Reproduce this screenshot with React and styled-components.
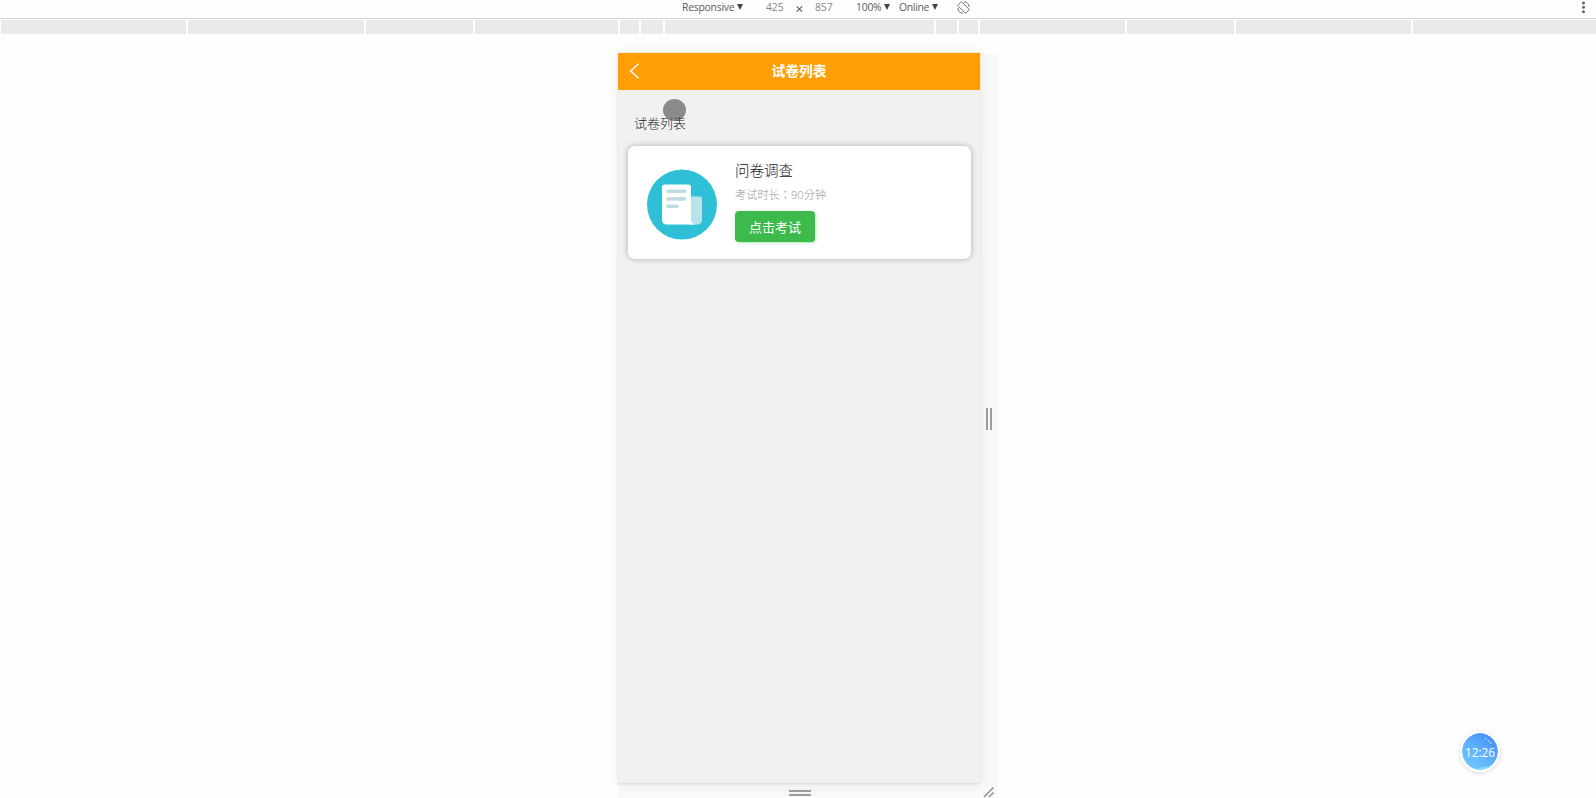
import React from "react";
import styled, { createGlobalStyle } from "styled-components";

const Global = createGlobalStyle`
  * { box-sizing: border-box; }
  html, body { margin: 0; background: #fefefe; overflow: hidden; }
  body { font-family: "Open Sans", "Noto Sans CJK SC", sans-serif; }
`;

const Page = styled.div`
  position: relative;
  width: 1596px;
  height: 798px;
  display: flex;
  flex-direction: column;
  overflow: hidden;
`;

const Toolbar = styled.header`
  flex: none;
  height: 19px;
  padding: 0 10px 4px 682px;
  display: flex;
  align-items: center;
  border-bottom: 1px solid #d2d2d2;
  background: #fefefe;
`;

const ToolCell = styled.div`
  flex: none;
  width: ${(p) => p.$w}px;
  display: flex;
  align-items: center;
  font-size: 10.4px;
  line-height: 14px;
  letter-spacing: ${(p) => p.$track || 0}px;
  white-space: nowrap;
  color: ${(p) => (p.$muted ? "#858585" : "#5c5c5c")};
`;

const Caret = styled.span`
  width: 0;
  height: 0;
  margin: 0 0 1px 3px;
  border: 3px solid transparent;
  border-top: 6px solid #444;
  border-bottom: 0;
`;

const MoreIcon = styled.svg`
  flex: none;
  display: block;
  margin-left: auto;
`;

const Times = styled.svg`
  margin-top: 4px;
`;

const Ruler = styled.div`
  flex: none;
  height: 15px;
  padding: 1px 0 0 1px;
  display: flex;
  gap: 2px;
`;

const Segment = styled.div`
  flex: ${(p) => (p.$w ? `0 0 ${p.$w}px` : "1")};
  background: #eaeaea;
`;

const Stage = styled.main`
  width: 379px;
  height: 745px;
  margin: 19px 0 0 618px;
  display: grid;
  grid-template-columns: 362px 17px;
  grid-template-rows: 731px 14px;
  background: #f9f9f9;
`;

const Phone = styled.section`
  background: #f1f1f1;
  border-bottom: 1px solid #e3e3e3;
  box-shadow: 0 0 0 0.5px #dedede, 0 0 14px rgba(0, 0, 0, 0.07);
`;

const NavBar = styled.div`
  height: 37px;
  padding: 0 11px 2px;
  display: grid;
  grid-template-columns: 12px 1fr 12px;
  align-items: center;
  background: #ff9e05;
  color: #fff;
`;

const NavTitle = styled.h1`
  margin: 0;
  text-align: center;
  font-size: 13.8px;
  line-height: 20px;
  font-weight: 700;
`;

const ListHeading = styled.h2`
  margin: 0;
  padding: 24px 0 0 16px;
  font-size: 13px;
  line-height: 19px;
  font-weight: 300;
  color: #181818;
`;

const Card = styled.article`
  height: 113px;
  margin: 13px 9px 0 10px;
  padding: 0 0 0 19px;
  display: flex;
  border-radius: 7px;
  background: #fff;
  box-shadow: 0 0 6px rgba(0, 0, 0, 0.28);
`;

const PaperIcon = styled.svg`
  flex: none;
  display: block;
  margin: 23px 18px 0 0;
`;

const CardBody = styled.div`
  padding-top: 15px;
`;

const CardTitle = styled.h3`
  margin: 0;
  font-size: 14.5px;
  line-height: 20px;
  font-weight: 300;
  color: #141414;
`;

const Duration = styled.p`
  margin: 6px 0 8px;
  font-family: "Open Sans", "Noto Sans CJK TC", sans-serif;
  font-size: 11.2px;
  line-height: 16px;
  font-weight: 300;
  color: #989898;
`;

const StartButton = styled.button`
  display: block;
  width: 80px;
  height: 31px;
  padding: 1px 0 0;
  border: 0;
  border-radius: 4px;
  background: #3dba4c;
  box-shadow: 1px 1px 3px rgba(61, 186, 76, 0.4);
  color: #fff;
  font: 13px/20px "Open Sans", "Noto Sans CJK SC", sans-serif;
`;

const SideHandle = styled.div`
  display: flex;
  align-items: center;
  justify-content: center;
  gap: 2px;
`;

const BottomHandle = styled.div`
  display: flex;
  flex-direction: column;
  align-items: center;
  padding: 6px 0 0 1px;
  gap: 2px;
`;

const Grip = styled.span`
  width: ${(p) => (p.$vertical ? 2 : 22)}px;
  height: ${(p) => (p.$vertical ? 22 : 2)}px;
  background: #9c9c9c;
`;

const Touch = styled.div`
  position: absolute;
  left: 663px;
  top: 99px;
  width: 23px;
  height: 22px;
  border-radius: 50%;
  background: rgba(85, 85, 85, 0.65);
`;

const Clock = styled.div`
  position: absolute;
  left: 1460px;
  top: 731px;
  width: 40px;
  height: 41px;
  display: flex;
  align-items: center;
  justify-content: center;
  border: 2px solid #fff;
  border-radius: 50%;
  overflow: hidden;
  background: linear-gradient(35deg, #72caff 5%, #5db2fc 50%, #4087f8 95%);
  background-clip: padding-box;
  box-shadow: 0 1px 5px rgba(0, 0, 0, 0.16);
  color: #fff;
  font-size: 11.8px;
`;

const ClockArt = styled.svg`
  position: absolute;
  inset: 0;
`;

const ClockTime = styled.span`
  position: relative;
`;

const segments = [185, 176, 107, 143, 19, 22, 269, 21, 19, 145, 107, 175, 0];

export default function App() {
  return (
    <Page>
      <Global />
      <Toolbar>
        <ToolCell $w={84} $track={-0.25}>Responsive<Caret /></ToolCell>
        <ToolCell $w={30} $muted $track={-0.1}>425</ToolCell>
        <ToolCell $w={19}>
          <Times width="7" height="6" viewBox="0 0 7 6">
            <path d="M.7.3l5.4 5.4M6.1.3L.7 5.7" stroke="#666" strokeWidth="1.1" />
          </Times>
        </ToolCell>
        <ToolCell $w={41} $muted $track={-0.1}>857</ToolCell>
        <ToolCell $w={43} $track={-0.25}>100%<Caret /></ToolCell>
        <ToolCell $w={58} $track={-0.3}>Online<Caret /></ToolCell>
        <ToolCell $w={14}>
          <svg width="13" height="13" viewBox="0 0 13 13" fill="none" stroke="#666" strokeWidth=".9">
            <rect x="3.8" y=".8" width="5.4" height="11.4" rx="1.2" transform="rotate(-45 6.5 6.5)" />
            <path d="M7 .8a5.7 5.7 0 0 1 5.2 5.2M6 12.2A5.7 5.7 0 0 1 .8 7" />
          </svg>
        </ToolCell>
        <MoreIcon width="5" height="13" viewBox="0 0 5 13" fill="#656565">
          <circle cx="2.5" cy="2" r="1.5" />
          <circle cx="2.5" cy="6.3" r="1.5" />
          <circle cx="2.5" cy="10.7" r="1.5" />
        </MoreIcon>
      </Toolbar>
      <Ruler>
        {segments.map((w, i) => <Segment key={i} $w={w} />)}
      </Ruler>
      <Stage>
        <Phone>
          <NavBar>
            <svg width="12" height="16" viewBox="0 0 12 16" fill="none" stroke="#fff" strokeWidth="1.5">
              <path d="M9.5 .8L1.8 8l7.7 7.2" />
            </svg>
            <NavTitle>试卷列表</NavTitle>
          </NavBar>
          <ListHeading>试卷列表</ListHeading>
          <Card>
            <PaperIcon width="70" height="71" viewBox="0 0 70 71">
              <circle cx="35" cy="35.6" r="35" fill="#2fc0d8" />
              <path d="M42 27.5h11q2 0 2 2v21q0 5-5 5h-8z" fill="#b9e3ea" />
              <path d="M18 15.5h23q3 0 3 3v32q0 4 4 5H20q-5 0-5-5v-32q0-3 3-3z" fill="#fff" />
              <path d="M21 22.3h16.5M21 29.9h16.5M21 37.3h9" stroke="#bedce1" strokeWidth="3.6" strokeLinecap="round" />
            </PaperIcon>
            <CardBody>
              <CardTitle>问卷调查</CardTitle>
              <Duration lang="zh-TW">考试时长：90分钟</Duration>
              <StartButton>点击考试</StartButton>
            </CardBody>
          </Card>
        </Phone>
        <SideHandle>
          <Grip $vertical />
          <Grip $vertical />
        </SideHandle>
        <BottomHandle>
          <Grip />
          <Grip />
        </BottomHandle>
        <svg width="17" height="14" viewBox="0 0 17 14" fill="none" stroke="#929292" strokeWidth="1.5">
          <path d="M4 13l9.5-9.5M9 13l4.5-4.5" />
        </svg>
      </Stage>
      <Touch />
      <Clock>
        <ClockArt width="37" height="37" viewBox="0 0 36 36" fill="none">
          <path d="M11 36q12-5 25-3v3z" fill="#8adaff" />
          <path d="M22 5l2 1M25 7l4 4" stroke="#b5d9ff" strokeWidth="1" strokeDasharray="2 1" />
        </ClockArt>
        <ClockTime>12:26</ClockTime>
      </Clock>
    </Page>
  );
}
